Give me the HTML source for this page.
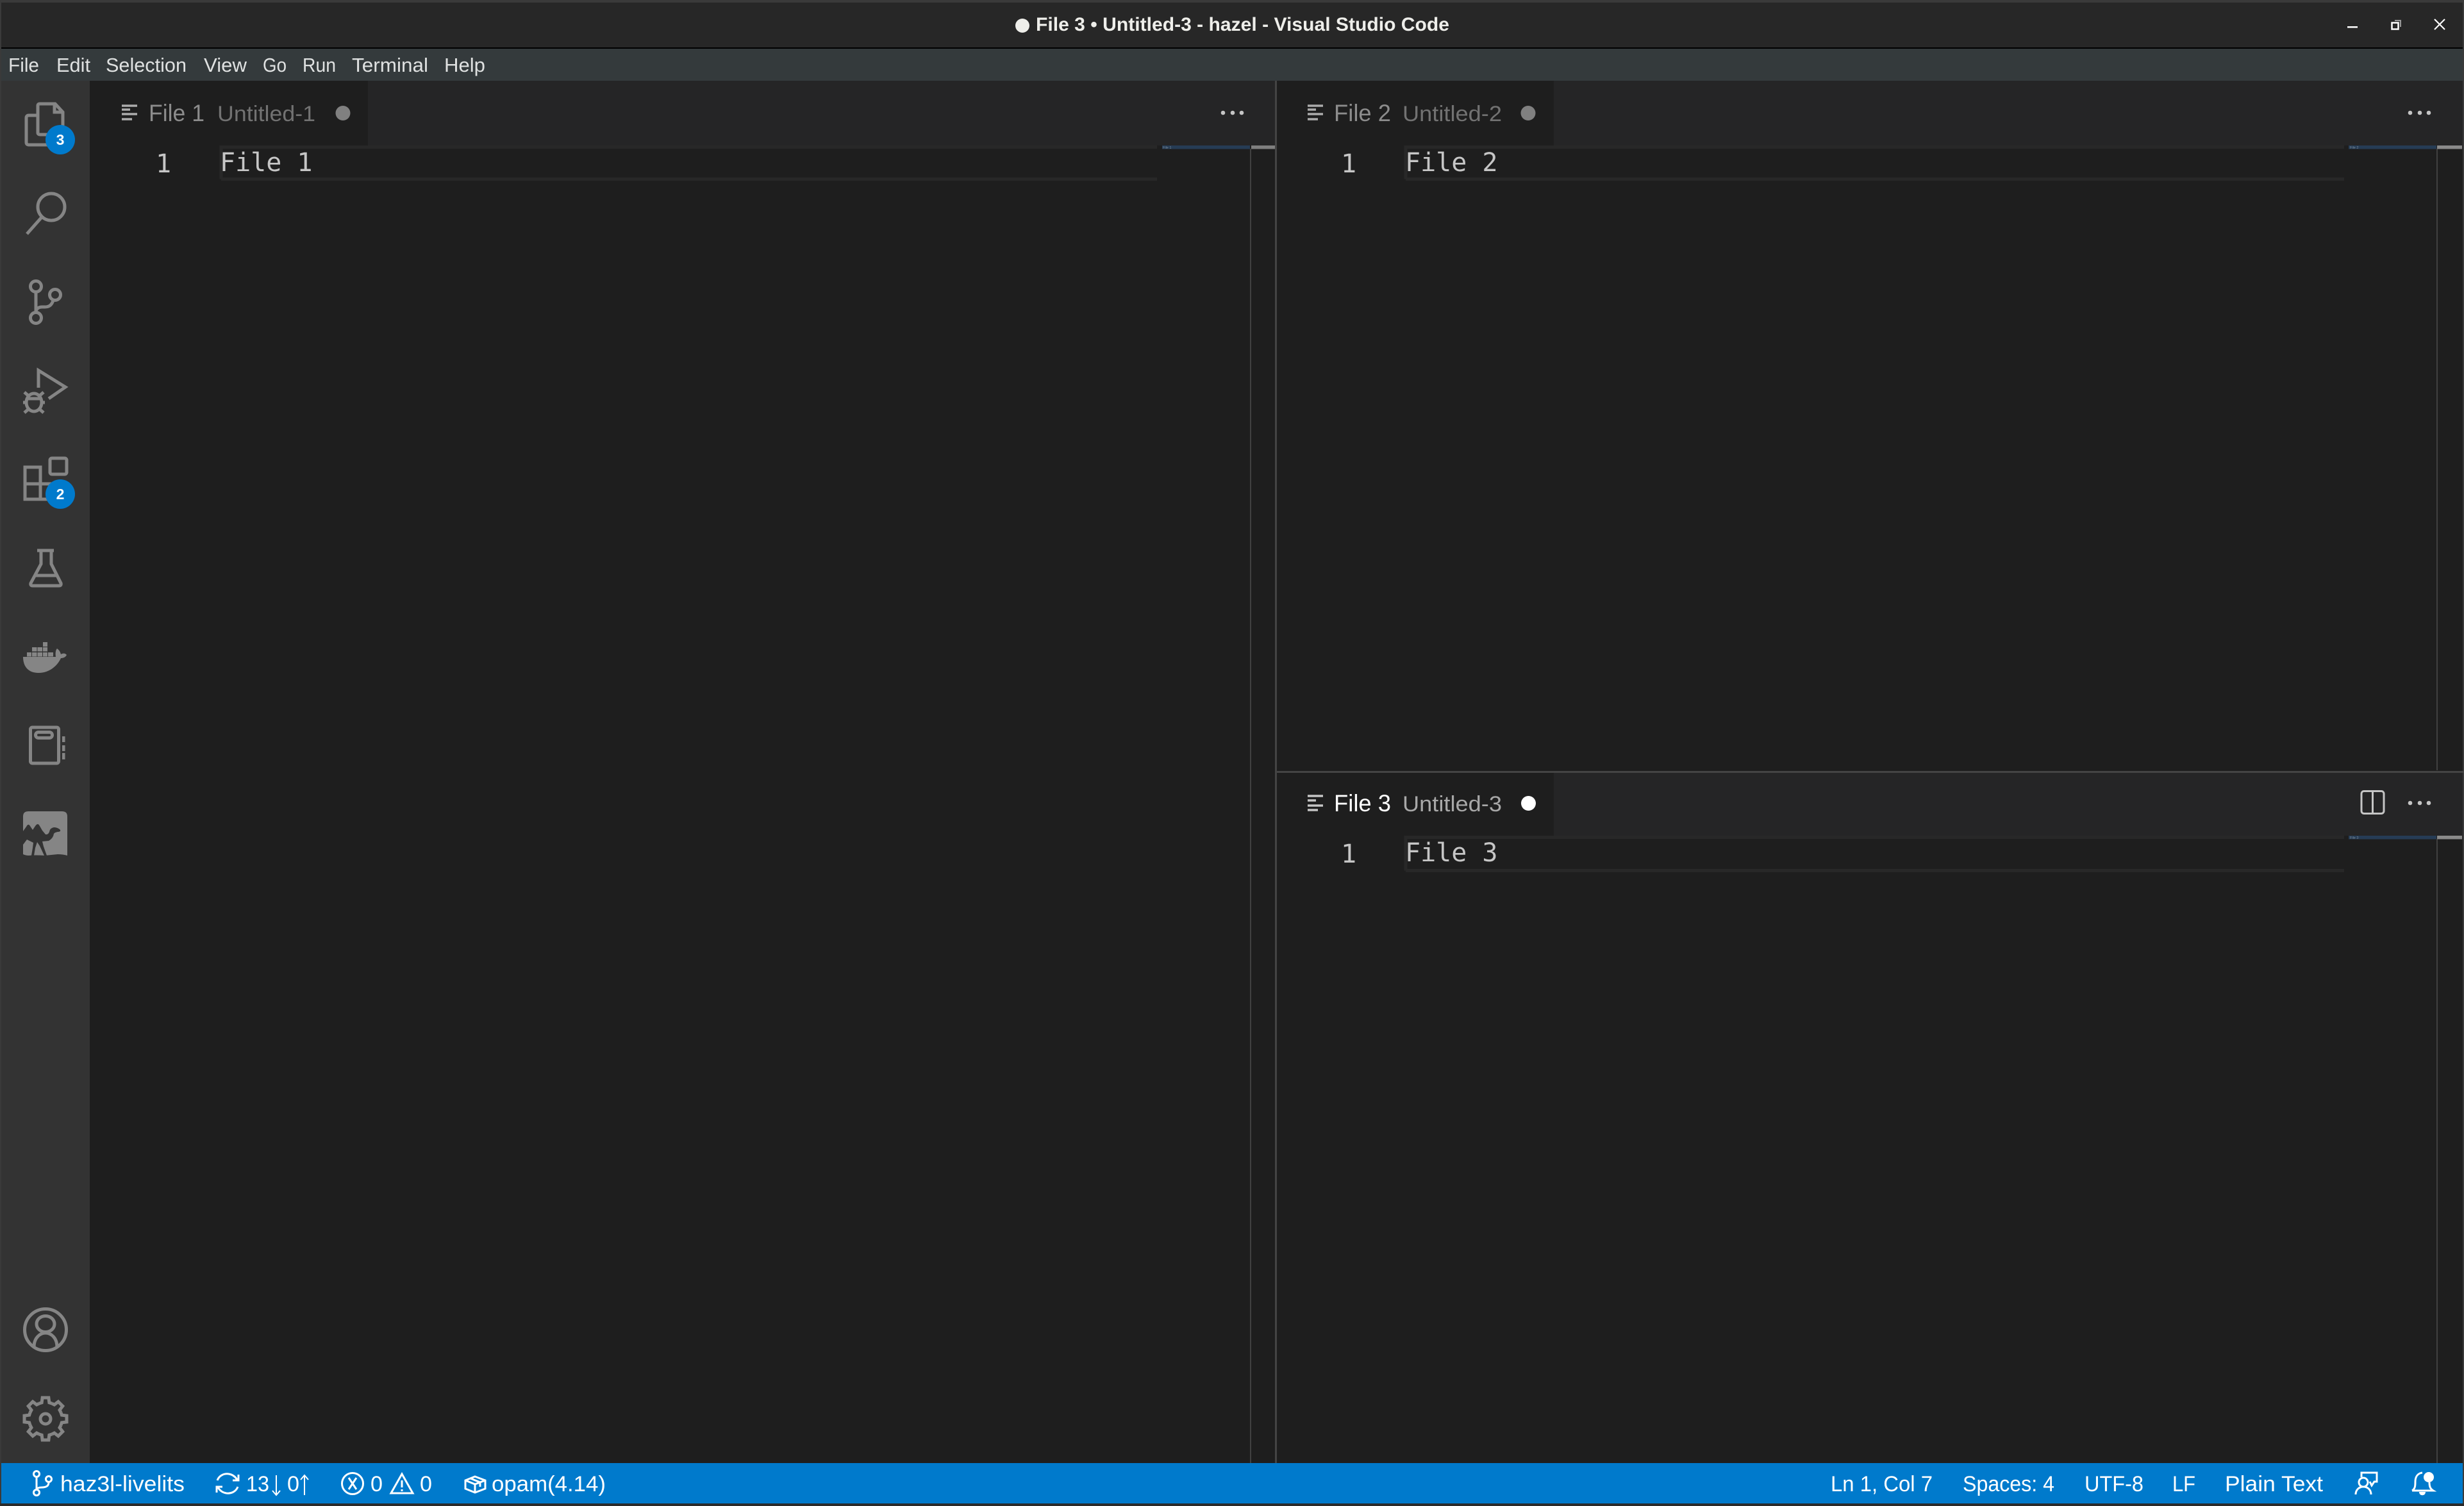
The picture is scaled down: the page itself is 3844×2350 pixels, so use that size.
<!DOCTYPE html>
<html><head><meta charset="utf-8"><title>File 3 • Untitled-3 - hazel - Visual Studio Code</title>
<style>
html,body{margin:0;padding:0;background:#2b2b2b;width:3844px;height:2350px;overflow:hidden}
svg{display:block}
text{font-family:"Liberation Sans",sans-serif;white-space:pre}
.m{font-size:31px;fill:#dfe1e1}
.t{font-size:37px}
.u{font-size:34px}
.c{font-family:"DejaVu Sans Mono","Liberation Mono",monospace;font-size:40px;fill:#c6c6c6}
.s{font-size:34px;fill:#fff}
.i{fill:none;stroke:#858585;stroke-width:5}
.w{fill:none;stroke:#fff;stroke-width:3}
</style></head><body>
<svg xmlns="http://www.w3.org/2000/svg" width="3844" height="2350" viewBox="0 0 3844 2350">
<rect width="3844" height="2350" fill="#3a3a3a"/>
<rect x="2" y="4" width="3840" height="70" fill="#272727"/>
<rect x="2" y="74" width="3840" height="2" fill="#000"/>
<rect x="2" y="76" width="3840" height="50" fill="#343a3c"/>
<rect x="2" y="126" width="138" height="2157" fill="#333"/>
<rect x="140" y="126" width="3702" height="2157" fill="#1e1e1e"/>
<rect y="2346" width="3844" height="4" fill="#2b2b2b"/>
<rect x="2" y="2283" width="3840" height="63" fill="#007acc"/>

<!-- title -->
<ellipse cx="1595" cy="40" rx="11" ry="11" fill="#eeeeea"/>
<text x="1616" y="48" font-size="30" font-weight="700" fill="#eeeeea" textLength="645" lengthAdjust="spacingAndGlyphs">File 3 • Untitled-3 - hazel - Visual Studio Code</text>
<rect x="3662" y="41" width="16" height="2.500" fill="#fff"/>
<path d="M3736 32H3745V42" fill="none" stroke="#999" stroke-width="2"/>
<rect x="3731.500" y="35.500" width="10" height="10" fill="none" stroke="#fff" stroke-width="2.500"/>
<path d="M3798 30L3814 46M3814 30L3798 46" stroke="#fff" stroke-width="2.200" fill="none"/>

<!-- menu -->
<text class="m" x="13" y="112" textLength="48" lengthAdjust="spacingAndGlyphs">File</text>
<text class="m" x="88" y="112" textLength="53" lengthAdjust="spacingAndGlyphs">Edit</text>
<text class="m" x="165" y="112" textLength="126" lengthAdjust="spacingAndGlyphs">Selection</text>
<text class="m" x="318" y="112" textLength="67" lengthAdjust="spacingAndGlyphs">View</text>
<text class="m" x="410" y="112" textLength="37" lengthAdjust="spacingAndGlyphs">Go</text>
<text class="m" x="472" y="112" textLength="52" lengthAdjust="spacingAndGlyphs">Run</text>
<text class="m" x="549" y="112" textLength="119" lengthAdjust="spacingAndGlyphs">Terminal</text>
<text class="m" x="693" y="112" textLength="64" lengthAdjust="spacingAndGlyphs">Help</text>

<!-- tab bars -->
<rect x="140" y="126" width="1850" height="101" fill="#252526"/>
<rect x="140" y="126" width="434" height="101" fill="#1e1e1e"/>
<rect x="1992" y="126" width="1850" height="101" fill="#252526"/>
<rect x="1992" y="126" width="432" height="101" fill="#1e1e1e"/>
<rect x="1992" y="1206" width="1850" height="98" fill="#252526"/>
<rect x="1992" y="1206" width="432" height="98" fill="#1e1e1e"/>

<!-- separators -->
<rect x="1950" y="232" width="2" height="2051" fill="#404040"/>
<rect x="3801" y="232" width="2" height="970" fill="#404040"/>
<rect x="3801" y="1309" width="2" height="974" fill="#404040"/>
<rect x="1989" y="126" width="3" height="2157" fill="#444"/>
<rect x="1992" y="1203" width="3850" height="3" fill="#444"/>

<!-- Pane 1 -->
<g>
<path d="M190 165h24M190 171h13M190 178h24M190 186h16" stroke="#c5c5c5" stroke-width="3.500" fill="none" opacity=".85"/>
<text class="t" x="232" y="189" fill="#8c8c8c" textLength="87" lengthAdjust="spacingAndGlyphs">File 1</text>
<text class="u" x="339" y="189" fill="#727272" textLength="153" lengthAdjust="spacingAndGlyphs">Untitled-1</text>
<ellipse cx="535" cy="176.500" rx="11.500" ry="11.500" fill="#808080"/>
<circle cx="1908" cy="176" r="3.300" fill="#c5c5c5"/><circle cx="1923" cy="176" r="3.300" fill="#c5c5c5"/><circle cx="1937" cy="176" r="3.300" fill="#c5c5c5"/>
<path d="M345 279.500V229.500H1805M345 279.500H1805" fill="none" stroke="#282828" stroke-width="5"/>
<rect x="1813" y="227" width="137" height="5.500" fill="#263c55"/>
<rect x="1952" y="227" width="37" height="5.500" fill="#7f7f7f"/>
<text x="243" y="269" class="c" fill="#c6c6c6">1</text>
<text x="343" y="267" class="c">File 1</text>
<text x="1814" y="232" font-size="5.500" fill="#7a8a99">File 1</text>
</g>

<!-- Pane 2 -->
<g>
<path d="M2040 165h24M2040 171h13M2040 178h24M2040 186h16" stroke="#c5c5c5" stroke-width="3.500" fill="none" opacity=".85"/>
<text class="t" x="2081" y="189" fill="#8c8c8c" textLength="89" lengthAdjust="spacingAndGlyphs">File 2</text>
<text class="u" x="2188" y="189" fill="#727272" textLength="155" lengthAdjust="spacingAndGlyphs">Untitled-2</text>
<ellipse cx="2384" cy="176.500" rx="11.500" ry="11.500" fill="#808080"/>
<circle cx="3760" cy="176" r="3.300" fill="#c5c5c5"/><circle cx="3775" cy="176" r="3.300" fill="#c5c5c5"/><circle cx="3789" cy="176" r="3.300" fill="#c5c5c5"/>
<path d="M2193 279.500V229.500H3657M2193 279.500H3657" fill="none" stroke="#282828" stroke-width="5"/>
<rect x="3664" y="227" width="137" height="5.500" fill="#263c55"/>
<rect x="3802" y="227" width="39" height="5.500" fill="#8a8a8a"/>
<text x="2092" y="269" class="c">1</text>
<text x="2192" y="267" class="c">File 2</text>
<text x="3666" y="232" font-size="5.500" fill="#7a8a99">File 2</text>
</g>

<!-- Pane 3 -->
<g>
<path d="M2040 1242h24M2040 1249h13M2040 1257h24M2040 1264h16" stroke="#c5c5c5" stroke-width="3.500" fill="none"/>
<text class="t" x="2081" y="1266" fill="#fff" textLength="89" lengthAdjust="spacingAndGlyphs">File 3</text>
<text class="u" x="2188" y="1266" fill="#a8a8a8" textLength="155" lengthAdjust="spacingAndGlyphs">Untitled-3</text>
<ellipse cx="2384.500" cy="1253.500" rx="11.500" ry="11.500" fill="#fff"/>
<rect x="3684" y="1234.500" width="35" height="35" rx="4" fill="none" stroke="#c5c5c5" stroke-width="3"/>
<path d="M3701.500 1234V1270" stroke="#c5c5c5" stroke-width="3"/>
<circle cx="3760" cy="1253" r="3.300" fill="#c5c5c5"/><circle cx="3775" cy="1253" r="3.300" fill="#c5c5c5"/><circle cx="3789" cy="1253" r="3.300" fill="#c5c5c5"/>
<path d="M2193 1358.500V1306.500H3657M2193 1358.500H3657" fill="none" stroke="#282828" stroke-width="5"/>
<rect x="3664" y="1304" width="137" height="5.500" fill="#263c55"/>
<rect x="3802" y="1304" width="39" height="5.500" fill="#8a8a8a"/>
<text x="2092" y="1346" class="c">1</text>
<text x="2192" y="1344" class="c">File 3</text>
<text x="3666" y="1309" font-size="5.500" fill="#7a8a99">File 3</text>
</g>

<!-- Activity icons -->
<path class="i" d="M57 180H45Q41 180 41 184V222Q41 226 45 226H80Q84 226 84 222V212"/>
<path class="i" d="M59 207V165Q59 162 62 162H86L98 175V205Q98 210 94 210H63Q59 210 59 207ZM85 162V175H98"/>
<circle cx="94" cy="218" r="23" fill="#007acc"/>
<text x="94" y="226" text-anchor="middle" font-size="23" font-weight="700" fill="#fff">3</text>

<circle class="i" cx="80" cy="323" r="21"/>
<path class="i" d="M65 339L42 365"/>

<circle class="i" cx="56" cy="447" r="8.500" stroke-width="4.500"/>
<circle class="i" cx="86" cy="460" r="8.500" stroke-width="4.500"/>
<circle class="i" cx="56" cy="496" r="8.500" stroke-width="4.500"/>
<path class="i" stroke-width="4.500" d="M56 456V487M83 469C80 477 76 479 70 479H66C60 479 56 482 56 487"/>

<path class="i" d="M60 605V578L102 604L76 622"/>
<ellipse class="i" cx="53" cy="628" rx="12" ry="14"/>
<path class="i" d="M41 622H65M38 612L46 619M68 612L60 619M36 628H41M65 628H70M38 644L46 637M68 644L60 637"/>

<path class="i" d="M39 729H63V779H39ZM39 755H63M63 755H82V779H63"/>
<rect class="i" x="78" y="715" width="26" height="25" rx="3"/>
<circle cx="94" cy="771" r="23" fill="#007acc"/>
<text x="94" y="779" text-anchor="middle" font-size="23" font-weight="700" fill="#fff">2</text>

<path class="i" d="M58 859H84M64 859V880L48 910Q47 914 51 914H92Q96 914 95 910L80 880V859M55 898H89"/>

<g fill="#858585">
<rect x="67" y="1002" width="7" height="7"/>
<rect x="50" y="1010" width="7.500" height="6.500"/><rect x="58.500" y="1010" width="7.500" height="6.500"/><rect x="67" y="1010" width="7" height="6.500"/>
<rect x="42" y="1018" width="7" height="6.500"/><rect x="50" y="1018" width="7.500" height="6.500"/><rect x="58.500" y="1018" width="7.500" height="6.500"/><rect x="67" y="1018" width="7" height="6.500"/><rect x="75" y="1018" width="8" height="6.500"/>
<path d="M36 1025H87C86 1019 87 1014 89 1012C92 1014 94 1017 95 1021C98 1019 102 1019 104 1022C102 1026 98 1027 95 1027C90 1038 78 1050 60 1050C44 1050 36 1040 36 1025Z"/>
</g>

<rect class="i" x="47.500" y="1135" width="44" height="56" rx="3" stroke-width="4.500"/>
<rect class="i" x="55.500" y="1142.500" width="26" height="9" rx="4.500" stroke-width="4.500"/>
<path d="M97 1149h4.500v9H97ZM97 1163h4.500v9H97ZM97 1175h4.500v10H97Z" fill="#858585"/>

<path fill="#858585" d="M36 1274Q36 1266 44 1266H97Q105 1266 105 1274V1335Q98 1333 90 1333Q80 1334 70 1335Q55 1334 45 1335Q40 1335 36 1333Z"/>
<path fill="#333" d="M36 1297L41 1290Q44 1284 47 1289L51 1295L55 1289Q59 1283 62 1289L66 1296L71 1302Q75 1303 77 1298Q78 1292 84 1291Q90 1291 94 1295Q95 1298 90 1298Q85 1299 84 1301Q83 1308 76 1312L66 1313L68 1321L73 1335H69L62 1320L58 1314L55 1323L53 1335H49L51 1323L52 1315L42 1310L36 1318Z"/>

<circle class="i" cx="71" cy="2075" r="32.500"/>
<ellipse class="i" cx="71" cy="2066" rx="14" ry="12.500"/>
<path class="i" d="M53 2102C53 2088 62 2080 71 2080C80 2080 89 2088 89 2102"/>

<g transform="translate(71 2214)" class="i">
<g><path d="M-9.950-24L-5.850-25.300L-4.870-33H4.870L5.850-25.300L9.950-24"/></g>
<g transform="rotate(45)"><path d="M-9.950-24L-5.850-25.300L-4.870-33H4.870L5.850-25.300L9.950-24"/></g>
<g transform="rotate(90)"><path d="M-9.950-24L-5.850-25.300L-4.870-33H4.870L5.850-25.300L9.950-24"/></g>
<g transform="rotate(135)"><path d="M-9.950-24L-5.850-25.300L-4.870-33H4.870L5.850-25.300L9.950-24"/></g>
<g transform="rotate(180)"><path d="M-9.950-24L-5.850-25.300L-4.870-33H4.870L5.850-25.300L9.950-24"/></g>
<g transform="rotate(225)"><path d="M-9.950-24L-5.850-25.300L-4.870-33H4.870L5.850-25.300L9.950-24"/></g>
<g transform="rotate(270)"><path d="M-9.950-24L-5.850-25.300L-4.870-33H4.870L5.850-25.300L9.950-24"/></g>
<g transform="rotate(315)"><path d="M-9.950-24L-5.850-25.300L-4.870-33H4.870L5.850-25.300L9.950-24"/></g>
<circle r="8"/>
</g>

<!-- Status bar -->
<circle class="w" cx="57" cy="2300" r="4.500"/><circle class="w" cx="76" cy="2308" r="4.500"/><circle class="w" cx="57" cy="2329" r="4.500"/>
<path class="w" d="M57 2305V2324M76 2313C76 2320 70 2321 65 2321C60 2321 58 2322 57 2324"/>
<text class="s" x="94" y="2327" textLength="194" lengthAdjust="spacingAndGlyphs">haz3l-livelits</text>

<path class="w" d="M339 2310C342 2302 350 2299 357 2300C363 2301 367 2304 370 2309M371 2320C368 2328 360 2331 353 2330C347 2329 343 2326 340 2321"/>
<path class="w" d="M363 2310H372V2301M347 2320H338V2329"/>
<text class="s" x="384" y="2327" textLength="36" lengthAdjust="spacingAndGlyphs">13</text>
<path d="M431 2302V2332M425 2326L431 2333L437 2326" fill="none" stroke="#fff" stroke-width="2"/>
<text class="s" x="448" y="2327" textLength="19" lengthAdjust="spacingAndGlyphs">0</text>
<path d="M475 2333V2303M469 2309L475 2302L481 2309" fill="none" stroke="#fff" stroke-width="2"/>

<circle class="w" cx="550" cy="2315" r="16.500"/>
<path class="w" d="M544 2306L556 2324M556 2306L544 2324"/>
<text class="s" x="578" y="2327" textLength="19" lengthAdjust="spacingAndGlyphs">0</text>
<path class="w" d="M627 2300L644 2330H610Z"/>
<path class="w" d="M627 2310V2321M627 2324V2327"/>
<text class="s" x="655" y="2327" textLength="19" lengthAdjust="spacingAndGlyphs">0</text>

<path class="w" d="M741 2304L757 2310V2323L741 2329L726 2323V2310ZM726 2310L741 2316L757 2310M741 2316V2329M734 2307L749 2313V2320"/>
<text class="s" x="767" y="2327" textLength="178" lengthAdjust="spacingAndGlyphs">opam(4.14)</text>

<text class="s" x="2856" y="2327" textLength="159" lengthAdjust="spacingAndGlyphs">Ln 1, Col 7</text>
<text class="s" x="3062" y="2327" textLength="143" lengthAdjust="spacingAndGlyphs">Spaces: 4</text>
<text class="s" x="3252" y="2327" textLength="92" lengthAdjust="spacingAndGlyphs">UTF-8</text>
<text class="s" x="3389" y="2327" textLength="36" lengthAdjust="spacingAndGlyphs">LF</text>
<text class="s" x="3471" y="2327" textLength="153" lengthAdjust="spacingAndGlyphs">Plain Text</text>

<path class="w" d="M3684 2305V2298H3708V2312H3704L3700 2318L3697 2312"/>
<circle class="w" cx="3687" cy="2313" r="7"/>
<path class="w" d="M3675 2332C3675 2325 3680 2320 3687 2320C3694 2320 3699 2325 3699 2332"/>

<path class="w" d="M3763 2326C3768 2323 3768 2318 3768 2312C3768 2304 3772 2299 3779 2298M3763 2326H3796C3791 2323 3790 2319 3790 2313"/>
<circle cx="3789" cy="2305" r="8" fill="#fff"/>
<path d="M3774 2328H3784C3784 2335 3774 2335 3774 2328Z" fill="#fff"/>
</svg>
</body></html>
